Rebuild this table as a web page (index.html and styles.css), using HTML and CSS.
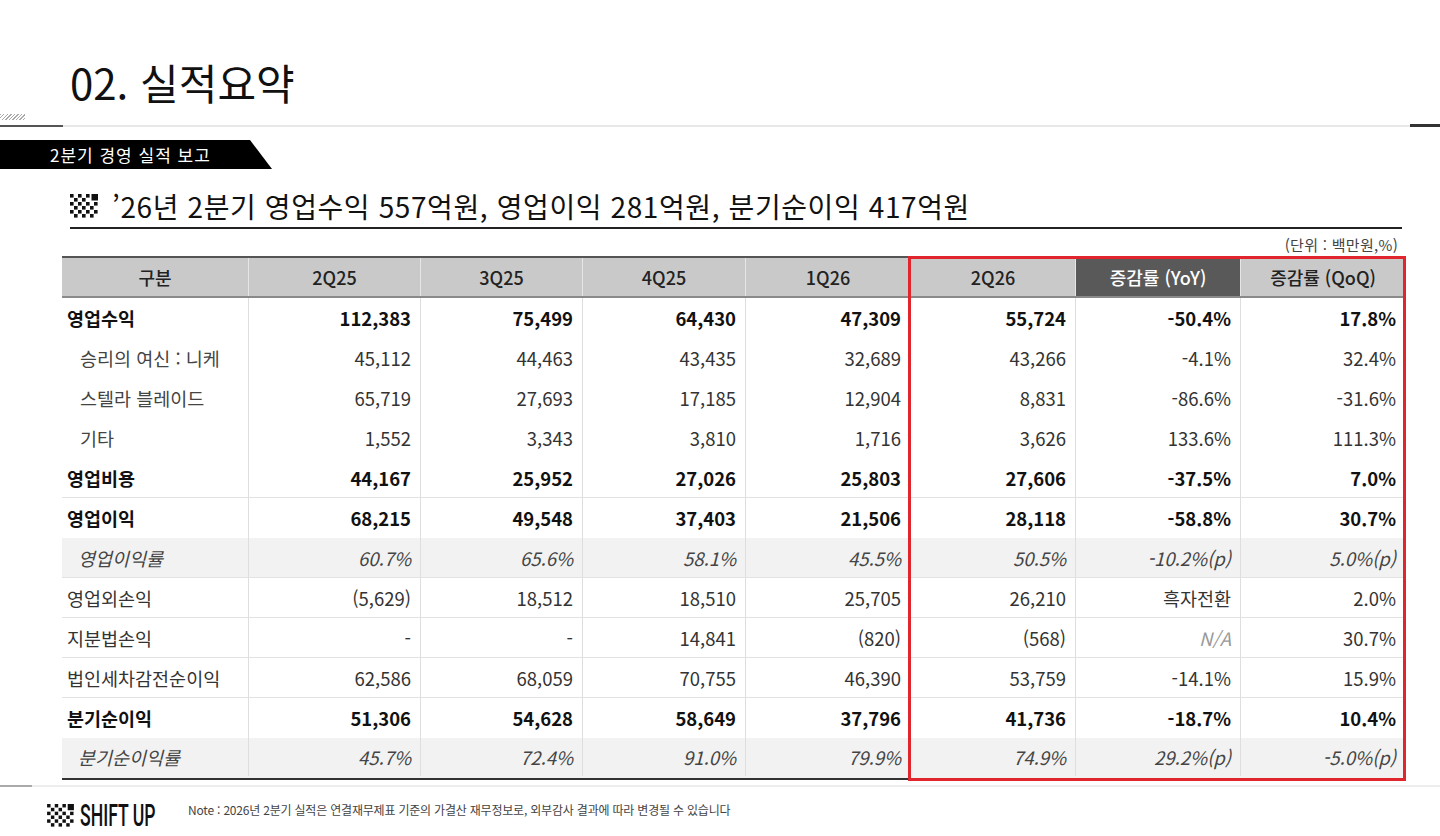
FILE: index.html
```html
<!DOCTYPE html>
<html lang="ko">
<head>
<meta charset="utf-8">
<title>02. 실적요약</title>
<link rel="stylesheet" href="styles.css">
</head>
<body>
<div class="slide">
  <header class="top">
    <h1 class="title">02. 실적요약</h1>
  </header>
  <div class="rule">
    <div class="rule-left"><div class="hatch"></div></div>
    <div class="rule-mid"></div>
    <div class="rule-right"></div>
  </div>
  <div class="banner">2분기 경영 실적 보고</div>
  <div class="headline">
    <svg class="checker" viewBox="0 0 28 24" width="28" height="24">
      <g fill="#111">
        <rect x="0" y="0" width="3.6" height="3.6"/><rect x="8" y="0" width="3.6" height="3.6"/><rect x="16" y="0" width="3.6" height="3.6"/>
        <rect x="21.5" y="0" width="6.5" height="6.5"/>
        <rect x="4" y="4" width="3.6" height="3.6"/><rect x="12" y="4" width="3.6" height="3.6"/>
        <rect x="0" y="8" width="3.6" height="3.6"/><rect x="8" y="8" width="3.6" height="3.6"/><rect x="16" y="8" width="3.6" height="3.6"/><rect x="24" y="8" width="3.6" height="3.6"/>
        <rect x="4" y="12" width="3.6" height="3.6"/><rect x="12" y="12" width="3.6" height="3.6"/><rect x="20" y="12" width="3.6" height="3.6"/>
        <rect x="0" y="16" width="3.6" height="3.6"/><rect x="8" y="16" width="3.6" height="3.6"/><rect x="16" y="16" width="3.6" height="3.6"/><rect x="24" y="16" width="3.6" height="3.6"/>
        <rect x="4" y="20" width="3.6" height="3.6"/><rect x="12" y="20" width="3.6" height="3.6"/><rect x="20" y="20" width="3.6" height="3.6"/>
      </g>
    </svg>
    <h2 class="headline-text">’26년 2분기 영업수익 557억원, 영업이익 281억원, 분기순이익 417억원</h2>
  </div>
  <div class="unit">(단위 : 백만원,%)</div>

  <div class="table-wrap">
    <div class="row head">
      <div class="c">구분</div><div class="c">2Q25</div><div class="c">3Q25</div><div class="c">4Q25</div><div class="c">1Q26</div><div class="c">2Q26</div><div class="c dark">증감률 (YoY)</div><div class="c">증감률 (QoQ)</div>
    </div>
    <div class="row bold">
      <div class="c lab">영업수익</div><div class="c">112,383</div><div class="c">75,499</div><div class="c">64,430</div><div class="c">47,309</div><div class="c">55,724</div><div class="c">-50.4%</div><div class="c">17.8%</div>
    </div>
    <div class="row sub">
      <div class="c lab">승리의 여신 : 니케</div><div class="c">45,112</div><div class="c">44,463</div><div class="c">43,435</div><div class="c">32,689</div><div class="c">43,266</div><div class="c">-4.1%</div><div class="c">32.4%</div>
    </div>
    <div class="row sub">
      <div class="c lab">스텔라 블레이드</div><div class="c">65,719</div><div class="c">27,693</div><div class="c">17,185</div><div class="c">12,904</div><div class="c">8,831</div><div class="c">-86.6%</div><div class="c">-31.6%</div>
    </div>
    <div class="row sub">
      <div class="c lab">기타</div><div class="c">1,552</div><div class="c">3,343</div><div class="c">3,810</div><div class="c">1,716</div><div class="c">3,626</div><div class="c">133.6%</div><div class="c">111.3%</div>
    </div>
    <div class="row bold line">
      <div class="c lab">영업비용</div><div class="c">44,167</div><div class="c">25,952</div><div class="c">27,026</div><div class="c">25,803</div><div class="c">27,606</div><div class="c">-37.5%</div><div class="c">7.0%</div>
    </div>
    <div class="row bold">
      <div class="c lab">영업이익</div><div class="c">68,215</div><div class="c">49,548</div><div class="c">37,403</div><div class="c">21,506</div><div class="c">28,118</div><div class="c">-58.8%</div><div class="c">30.7%</div>
    </div>
    <div class="row rate line">
      <div class="c lab">영업이익률</div><div class="c">60.7%</div><div class="c">65.6%</div><div class="c">58.1%</div><div class="c">45.5%</div><div class="c">50.5%</div><div class="c">-10.2%(p)</div><div class="c">5.0%(p)</div>
    </div>
    <div class="row line">
      <div class="c lab">영업외손익</div><div class="c">(5,629)</div><div class="c">18,512</div><div class="c">18,510</div><div class="c">25,705</div><div class="c">26,210</div><div class="c">흑자전환</div><div class="c">2.0%</div>
    </div>
    <div class="row line">
      <div class="c lab">지분법손익</div><div class="c">-</div><div class="c">-</div><div class="c">14,841</div><div class="c">(820)</div><div class="c">(568)</div><div class="c na">N/A</div><div class="c">30.7%</div>
    </div>
    <div class="row line">
      <div class="c lab">법인세차감전순이익</div><div class="c">62,586</div><div class="c">68,059</div><div class="c">70,755</div><div class="c">46,390</div><div class="c">53,759</div><div class="c">-14.1%</div><div class="c">15.9%</div>
    </div>
    <div class="row bold">
      <div class="c lab">분기순이익</div><div class="c">51,306</div><div class="c">54,628</div><div class="c">58,649</div><div class="c">37,796</div><div class="c">41,736</div><div class="c">-18.7%</div><div class="c">10.4%</div>
    </div>
    <div class="row rate last">
      <div class="c lab">분기순이익률</div><div class="c">45.7%</div><div class="c">72.4%</div><div class="c">91.0%</div><div class="c">79.9%</div><div class="c">74.9%</div><div class="c">29.2%(p)</div><div class="c">-5.0%(p)</div>
    </div>
    <div class="highlight"></div>
  </div>

  <footer class="footer">
    <div class="foot-rule"><div class="foot-stub"></div></div>
    <div class="foot-row">
      <div class="logo">
        <svg class="logo-mark" viewBox="0 0 28 24" width="27" height="23">
          <g fill="#111">
            <rect x="0" y="0" width="3.6" height="3.6"/><rect x="8" y="0" width="3.6" height="3.6"/><rect x="16" y="0" width="3.6" height="3.6"/>
            <rect x="21.5" y="0" width="6.5" height="6.5"/>
            <rect x="4" y="4" width="3.6" height="3.6"/><rect x="12" y="4" width="3.6" height="3.6"/>
            <rect x="0" y="8" width="3.6" height="3.6"/><rect x="8" y="8" width="3.6" height="3.6"/><rect x="16" y="8" width="3.6" height="3.6"/><rect x="24" y="8" width="3.6" height="3.6"/>
            <rect x="4" y="12" width="3.6" height="3.6"/><rect x="12" y="12" width="3.6" height="3.6"/><rect x="20" y="12" width="3.6" height="3.6"/>
            <rect x="0" y="16" width="3.6" height="3.6"/><rect x="8" y="16" width="3.6" height="3.6"/><rect x="16" y="16" width="3.6" height="3.6"/><rect x="24" y="16" width="3.6" height="3.6"/>
            <rect x="4" y="20" width="3.6" height="3.6"/><rect x="12" y="20" width="3.6" height="3.6"/><rect x="20" y="20" width="3.6" height="3.6"/>
          </g>
        </svg>
        <span class="logo-text">SHIFT UP</span>
      </div>
      <p class="note">Note : 2026년 2분기 실적은 연결재무제표 기준의 가결산 재무정보로, 외부감사 결과에 따라 변경될 수 있습니다</p>
    </div>
  </footer>
</div>
</body>
</html>
```

FILE: styles.css
```css
* { box-sizing: border-box; }
html, body { margin: 0; padding: 0; background: #fff; }
body {
  font-family: "Noto Sans CJK KR", "Noto Sans", sans-serif;
  color: #222;
}
.slide { width: 1440px; height: 836px; overflow: hidden; background: #fff; }

.top { height: 114px; padding: 57px 0 0 70px; }
.title {
  margin: 0;
  font-size: 42px;
  line-height: 50px;
  font-weight: 400;
  color: #111;
  letter-spacing: 0;
}

.rule { display: flex; align-items: flex-end; height: 13px; }
.rule-left {
  width: 63px; height: 13px;
  border-bottom: 2px solid #555;
  display: flex; align-items: flex-start;
}
.hatch {
  width: 25px; height: 6px;
  background: repeating-linear-gradient(135deg, #aaa 0 1px, #fff 1px 2.5px);
}
.rule-mid { flex: 1; height: 2px; background: #e8e8e8; }
.rule-right { width: 30px; height: 3px; background: #333; }

.banner {
  margin-top: 13px;
  width: 272px; height: 29px;
  background: #000;
  color: #fff;
  font-size: 17px;
  letter-spacing: 1px;
  line-height: 29px;
  padding-left: 50px;
  clip-path: polygon(0 0, 250px 0, 100% 100%, 0 100%);
}

.headline {
  margin: 18px 0 0 70px;
  width: 1332px;
  height: 42px;
  border-bottom: 2px solid #222;
  display: flex;
  align-items: center;
  gap: 14px;
  padding-bottom: 2px;
}
.checker { flex: none; }
.headline-text {
  margin: 0;
  font-size: 28px;
  font-weight: 400;
  color: #111;
  letter-spacing: 0.6px;
  white-space: nowrap;
}

.unit {
  width: 1398px;
  height: 19px;
  margin-top: 6px;
  text-align: right;
  font-size: 15px;
  letter-spacing: 0.3px;
  line-height: 19px;
  color: #444;
}

.table-wrap {
  position: relative;
  margin-left: 62px;
  margin-top: 2px;
  width: 1343px;
}
.row {
  display: grid;
  grid-template-columns: 186px 172px 162px 163px 165px 165px 165px 165px;
  height: 40px;
  font-size: 18.5px;
  color: #333;
}
.row .c {
  display: flex;
  align-items: center;
  justify-content: flex-end;
  padding-right: 9px;
  border-left: 1px solid #dedede;
  white-space: nowrap;
}
.row .c:first-child { border-left: none; }
.row .c.lab { justify-content: flex-start; padding-left: 5px; padding-right: 0; }

.row.head {
  height: 42px;
  border-top: 2px solid #555;
  border-bottom: 2px solid #8a8a8a;
  background: #c9c9c9;
  font-size: 18px;
  font-weight: 500;
  color: #222;
}
.row.head .c { justify-content: center; padding-right: 0; border-left: 1px solid #e6e6e6; }
.row.head .c:first-child { border-left: none; }
.row.head .c.dark { background: #595959; color: #fff; }

.row.bold { font-weight: 700; color: #111; }
.row.sub .c.lab { padding-left: 18px; color: #444; }
.row.rate { background: #f2f2f2; font-style: italic; color: #444; }
.row.rate .c.lab { padding-left: 16px; }
.row.line { border-bottom: 1px solid #e2e2e2; }
.row.last { height: 42px; border-bottom: 2px solid #333; padding-bottom: 2px; }
.row .c.na { color: #999; font-style: italic; }

.highlight {
  position: absolute;
  left: 846px;
  top: 0;
  width: 498px;
  bottom: -1px;
  border: 3px solid #e0262c;
  pointer-events: none;
}

.footer { margin-top: 5px; }
.foot-rule { height: 2px; background: #ededed; }
.foot-stub { width: 32px; height: 2px; background: #aaa; }
.foot-row {
  display: flex;
  align-items: flex-start;
  padding: 13px 0 0 47px;
}
.logo { display: flex; align-items: center; gap: 6px; width: 141px; flex: none; }
.logo-mark { flex: none; }
.logo-text {
  display: inline-block;
  font-family: "Roboto", "Liberation Sans", sans-serif;
  font-weight: 500;
  font-size: 32px;
  line-height: 30px;
  color: #111;
  transform: scaleX(0.55);
  transform-origin: left center;
  white-space: nowrap;
}
.note {
  margin: 3px 0 0;
  font-size: 12px;
  line-height: 14px;
  color: #444;
  letter-spacing: -0.2px;
}
```
